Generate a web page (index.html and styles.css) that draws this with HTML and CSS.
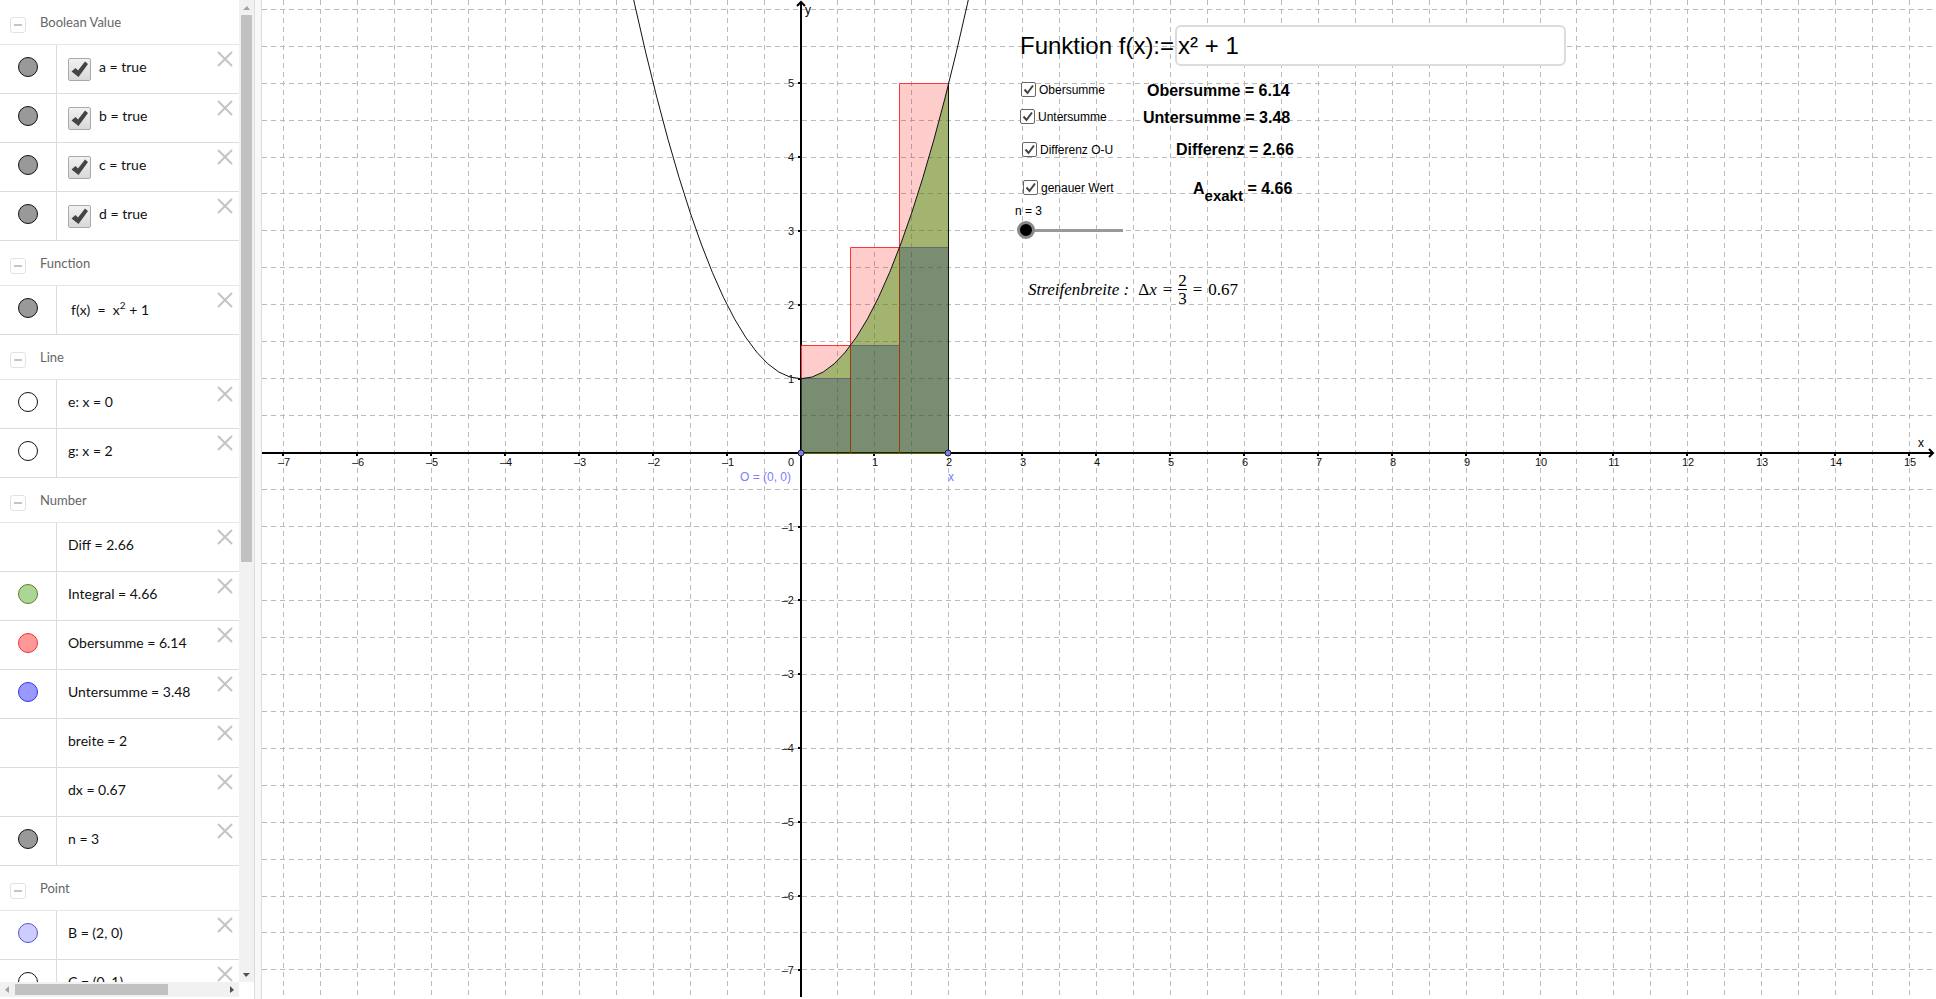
FILE: index.html
```html
<!DOCTYPE html>
<html lang="de">
<head>
    <meta charset="utf-8">
    <title>Obersumme und Untersumme</title>
    <link rel="stylesheet" href="styles.css">
</head>
<body>
    <div class="app">
        <aside class="algebra">
            <div class="list" id="list"></div>
            <div class="vscroll">
                <span class="arrow up"></span>
                <div class="vtrack"><div class="vthumb"></div></div>
                <span class="arrow down"></span>
            </div>
            <div class="hscroll">
                <span class="arrow left"></span>
                <div class="htrack"><div class="hthumb"></div></div>
                <span class="arrow right"></span>
            </div>
        </aside>
        <div class="splitter"></div>
        <main class="graphics" id="graphics">
            <svg class="plot" id="plot"></svg>

            <div class="obj function-box">
                <label for="fx">Funktion f(x):=</label>
                <input type="text" id="fx" value="x² + 1">
            </div>

            <label class="obj check c-ober"><input type="checkbox" checked>Obersumme</label>
            <label class="obj check c-unter"><input type="checkbox" checked>Untersumme</label>
            <label class="obj check c-diff"><input type="checkbox" checked>Differenz O-U</label>
            <label class="obj check c-exakt"><input type="checkbox" checked>genauer Wert</label>

            <div class="obj value v-ober">Obersumme = 6.14</div>
            <div class="obj value v-unter">Untersumme = 3.48</div>
            <div class="obj value v-diff">Differenz = 2.66</div>
            <div class="obj value v-exakt">A<sub>exakt</sub> = 4.66</div>

            <div class="obj slider">
                <label for="n">n = 3</label>
                <input type="range" id="n" min="3" max="50" value="3">
            </div>

            <div class="obj formula">
                <i>Streifenbreite :</i>
                <span>Δ<i>x</i></span>
                <span>=</span>
                <span class="frac"><span>2</span><span>3</span></span>
                <span>=</span>
                <span>0.67</span>
            </div>
        </main>
    </div>
    <script src="script.js"></script>
</body>
</html>
```
FILE: styles.css
```css
* {
    box-sizing: border-box;
}

body {
    margin: 0;
    background: white;
    font-family: "Liberation Sans", Arial, sans-serif;
}

.app {
    display: flex;
    height: 100vh;
    overflow: hidden;
}

/* algebra view */
.algebra {
    display: grid;
    grid-template-columns: 239px 15px;
    grid-template-rows: 1fr 15px;
    flex: none;
    padding-bottom: 2px;
    font-family: Lato, "Open Sans", sans-serif;
}

.list {
    overflow: hidden;
    min-height: 0;
}

.group {
    display: flex;
    align-items: center;
    gap: 14px;
    height: 45px;
    margin: 0;
    padding: 0 10px;
    border-bottom: 1px solid #e6e6e6;
    font-size: 13px;
    font-weight: normal;
    color: #666;
}

.toggle {
    width: 16px;
    height: 16px;
    margin-top: 5px;
    padding: 0 3px;
    border: 1px solid #e2e2e2;
    border-radius: 3px;
    background: white;
}

.toggle::before {
    content: "";
    display: block;
    height: 2px;
    background: #c4c4c4;
}

.row {
    display: flex;
    height: 49px;
    border-bottom: 1px solid #dcdcdc;
    font-size: 14px;
    color: #111;
}

.marble {
    width: 57px;
    padding: 12px 18px;
    border-right: 1px solid #dcdcdc;
}

.dot {
    display: block;
    width: 20px;
    height: 20px;
    padding: 0;
    border: 1px solid;
    border-radius: 50%;
}

.dot.gray { background: #999; border-color: #111; }
.dot.white { background: #fff; border-color: #111; }
.dot.green { background: #acd696; border-color: #5f7f20; }
.dot.red { background: #ff9999; border-color: #ee3333; }
.dot.blue { background: #9999ff; border-color: #3333ee; }
.dot.light { background: #ccccff; border-color: #5555cc; }

.def {
    display: flex;
    flex: 1;
    gap: 8px;
    padding-left: 11px;
    line-height: 44px;
    white-space: pre;
}

.def input {
    appearance: none;
    width: 23px;
    height: 23px;
    margin: 13px 0 0;
    border: 1px solid #aaa;
    border-radius: 2px;
    background: url('data:image/svg+xml,<svg xmlns="http://www.w3.org/2000/svg" viewBox="0 0 21 21"><path d="M2.500 12.500l4-3.500 2.500 2.500 7-9 3 2.500-9.500 13z" fill="%23444"/></svg>'), linear-gradient(#f2f2f2, #d8d8d8);
}

.def.latex {
    padding-left: 14px;
    line-height: 48px;
}

.def sup {
    font-size: 10px;
    line-height: 0;
}

.close {
    width: 16px;
    height: 16px;
    margin: 6px 6px 0 0;
    padding: 0;
    border: 0;
    background: none;
}

.close svg {
    display: block;
    stroke: #c4c4c4;
    stroke-width: 2;
}

.vscroll,
.hscroll {
    display: flex;
    background: #f1f1f1;
}

.vscroll {
    flex-direction: column;
}

.vtrack,
.htrack {
    flex: 1;
    padding: 0 2px;
}

.htrack {
    padding: 2px 0;
}

.vthumb {
    height: 57.5%;
    background: #c1c1c1;
}

.hthumb {
    width: 73%;
    height: 100%;
    background: #c1c1c1;
}

.arrow {
    width: 15px;
    height: 15px;
    background: #505050;
    clip-path: polygon(4px 6px, 11px 6px, 7px 10px);
}

.arrow.up {
    background: #a3a3a3;
    clip-path: polygon(4px 10px, 11px 10px, 8px 6px);
}

.arrow.left {
    background: #a3a3a3;
    clip-path: polygon(9px 4px, 9px 11px, 5px 8px);
}

.arrow.right {
    clip-path: polygon(6px 4px, 6px 11px, 10px 8px);
}

.splitter {
    flex: none;
    width: 8px;
    border: 1px solid #dcdcdc;
    border-top: 0;
    border-bottom: 0;
    background: #f8f8f8;
}

/* graphics view */
.graphics {
    position: relative;
    flex: 1;
    min-width: 0;
}

.plot {
    display: block;
    width: 100%;
    height: 100%;
}

.grid {
    stroke: #bbb;
    stroke-dasharray: 5 4;
}

.axis {
    stroke: #000;
    stroke-width: 2;
    fill: none;
}

.tick-label {
    font-size: 11px;
    fill: #111;
}

.axis-label {
    font-size: 12px;
}

.upper { fill: rgba(255, 0, 0, 0.2); }
.upper-line { stroke: #ff3333; fill: none; }
.lower { fill: rgba(0, 25, 124, 0.25); }
.lower-line { stroke: #66666e; }
.split-line { stroke: #963c0a; }
.base-line { stroke: #5a6400; }
.integral { fill: rgba(48, 151, 0, 0.45); }
.curve { stroke: #111; fill: none; }

.point {
    fill: #7d7dff;
    stroke: #222;
}

.point-label {
    font-size: 12px;
    fill: #7d7dff;
}

/* objects placed freely on the drawing pad */
.obj {
    position: absolute;
    white-space: nowrap;
}

.function-box {
    display: flex;
    align-items: center;
    gap: 1px;
    left: 758px;
    top: 25px;
    font-size: 24px;
}

.function-box input {
    width: 391px;
    height: 41px;
    padding: 0 1px;
    border: 2px solid #dcdcdc;
    border-radius: 6px;
    background: white;
    font: inherit;
}

.check {
    display: flex;
    align-items: center;
    gap: 3px;
    font-size: 12px;
    line-height: 14px;
}

.check input {
    appearance: none;
    width: 15px;
    height: 15px;
    margin: 0;
    border: 1px solid #666;
    border-radius: 2px;
    background: white url('data:image/svg+xml,<svg xmlns="http://www.w3.org/2000/svg" viewBox="0 0 13 13"><path d="M2.500 6.500L5.500 10 11 2.500" fill="none" stroke="%23444" stroke-width="2"/></svg>');
}

.c-ober { left: 759px; top: 82px; }
.c-unter { left: 758px; top: 109px; }
.c-diff { left: 760px; top: 142px; }
.c-exakt { left: 761px; top: 180px; }

.value {
    font-size: 16px;
    font-weight: bold;
    line-height: 18px;
}

.value sub {
    font-size: 15px;
    line-height: 0;
    vertical-align: -7px;
}

.v-ober { left: 885px; top: 82px; }
.v-unter { left: 881px; top: 109px; }
.v-diff { left: 914px; top: 141px; }
.v-exakt { left: 931px; top: 180px; }

.slider {
    left: 753px;
    top: 204px;
    font-size: 12px;
    line-height: 14px;
}

.slider input {
    appearance: none;
    display: block;
    width: 106px;
    height: 18px;
    margin: 3px 2px;
    background: linear-gradient(#999, #999) 9px 8px / 100% 3px no-repeat;
}

.slider input::-webkit-slider-thumb {
    appearance: none;
    width: 18px;
    height: 18px;
    border: 3px solid #888;
    border-radius: 50%;
    background: black;
}

.formula {
    display: flex;
    align-items: center;
    gap: 6px;
    left: 766px;
    top: 272px;
    font-family: "Liberation Serif", "Times New Roman", serif;
    font-size: 17px;
    line-height: 17px;
}

.formula > i {
    margin-right: 3px;
}

.frac {
    display: grid;
}

.frac span:first-child {
    border-bottom: 1px solid black;
}
```
FILE: script.js
```javascript
const groups = [
    { name: "Boolean Value", items: [
        { text: "a = true", color: "gray", check: true },
        { text: "b = true", color: "gray", check: true },
        { text: "c = true", color: "gray", check: true },
        { text: "d = true", color: "gray", check: true }
    ]},
    { name: "Function", items: [
        { text: "f(x)  =  x<sup>2</sup> + 1", color: "gray", latex: true }
    ]},
    { name: "Line", items: [
        { text: "e: x = 0", color: "white" },
        { text: "g: x = 2", color: "white" }
    ]},
    { name: "Number", items: [
        { text: "Diff = 2.66" },
        { text: "Integral = 4.66", color: "green" },
        { text: "Obersumme = 6.14", color: "red" },
        { text: "Untersumme = 3.48", color: "blue" },
        { text: "breite = 2" },
        { text: "dx = 0.67" },
        { text: "n = 3", color: "gray" }
    ]},
    { name: "Point", items: [
        { text: "B = (2, 0)", color: "light" },
        { text: "C = (0, 1)", color: "white" }
    ]}
];

// algebra list
let html = "";
groups.forEach(group => {
    html += `<h2 class="group"><button class="toggle" aria-label="${group.name}"></button>${group.name}</h2>`;
    group.items.forEach(item => {
        const dot = item.color ? `<button class="dot ${item.color}" aria-label="${item.text[0]}"></button>` : "";
        const tag = item.check ? "label" : "div";
        html += `
            <div class="row">
                <div class="marble">${dot}</div>
                <${tag} class="def${item.latex ? " latex" : ""}">${item.check ? '<input type="checkbox" checked>' : ""}<span>${item.text}</span></${tag}>
                <button class="close" aria-label="x"><svg width="16" height="16"><path d="M1 1l14 14M15 1L1 15"/></svg></button>
            </div>`;
    });
});
document.getElementById("list").innerHTML = html;

// drawing pad
const plot = document.getElementById("plot");
const unit = 73.9;
const x0 = 539;
const y0 = 453;

const px = x => x0 + x * unit;
const py = y => y0 - 0.4 - y * unit;
const f = x => x * x + 1;
const snap = v => Math.floor(v) + 0.5;

function line(cls, x1, y1, x2, y2) {
    return `<line class="${cls}" x1="${x1}" y1="${y1}" x2="${x2}" y2="${y2}"/>`;
}

function text(cls, x, y, str, anchor = "start") {
    return `<text class="${cls}" x="${x}" y="${y}" text-anchor="${anchor}">${str}</text>`;
}

function draw() {
    const w = plot.clientWidth;
    const h = plot.clientHeight;
    const n = 3;
    const dx = 2 / n;
    let s = "";

    // grid
    const firstX = Math.ceil(-x0 / unit * 2);
    const lastX = Math.floor((w - x0) / unit * 2);
    const firstY = Math.ceil((y0 - h) / unit * 2);
    const lastY = Math.floor(y0 / unit * 2);
    for (let i = firstX; i <= lastX; i++) {
        if (i !== 0) s += line("grid", snap(px(i / 2)), 0, snap(px(i / 2)), h - 2);
    }
    for (let i = firstY; i <= lastY; i++) {
        if (i !== 0) s += line("grid", 0, snap(py(i / 2)), w, snap(py(i / 2)));
    }

    // axes
    s += `<path class="axis" d="M0 ${y0}H${w - 3}M${w - 7} ${y0 - 4}l4 4l-4 4"/>`;
    s += `<path class="axis" d="M${x0} ${h - 2}V2M${x0 - 4} 6l4 -4l4 4"/>`;
    for (let i = Math.ceil(firstX / 2); i <= lastX / 2; i++) {
        if (i === 0) continue;
        const x = Math.floor(px(i));
        s += line("axis", x, y0, x, y0 + 3);
        s += text("tick-label", x + 1, y0 + 13, String(i).replace("-", "–"), "middle");
    }
    for (let i = Math.ceil(firstY / 2); i <= lastY / 2; i++) {
        const y = Math.round(py(i));
        // no number next to the arrow head
        if (i === 0 || y < 20) continue;
        s += line("axis", x0 - 3, y, x0, y);
        s += text("tick-label", x0 - 7, y + 4, String(i).replace("-", "–"), "end");
    }
    s += text("tick-label", x0 - 7, y0 + 13, "0", "end");
    s += text("axis-label", w - 18, y0 - 6, "x");
    s += text("axis-label", x0 + 4, 14, "y");

    // upper sum, integral, lower sum
    for (let i = 0; i < n; i++) {
        const top = f((i + 1) * dx);
        s += `<rect class="upper" x="${px(i * dx)}" y="${py(top)}" width="${dx * unit}" height="${top * unit}"/>`;
    }
    s += `<path class="integral" d="M${px(0)} ${py(0)}V${py(1)}Q${px(1)} ${py(1)} ${px(2)} ${py(5)}V${py(0)}z"/>`;
    for (let i = 0; i < n; i++) {
        const low = f(i * dx);
        s += `<rect class="lower" x="${px(i * dx)}" y="${py(low)}" width="${dx * unit}" height="${low * unit}"/>`;
        s += line("lower-line", px(i * dx), snap(py(low)), px((i + 1) * dx), snap(py(low)));
    }
    for (let i = 0; i < n; i++) {
        const left = snap(px(i * dx));
        const top = snap(py(f((i + 1) * dx)));
        s += `<path class="upper-line" d="M${left} ${py(f(i * dx))}V${top}H${px((i + 1) * dx)}"/>`;
        if (i > 0) s += line("split-line", left, py(f(i * dx)), left, y0);
    }
    s += line("base-line", px(0), y0 + 0.5, px(2), y0 + 0.5);
    s += line("curve", snap(px(2) - 0.5), py(5), snap(px(2) - 0.5), y0);

    // the parabola as one quadratic segment
    const a = 2.4;
    s += `<path class="curve" d="M${px(-a)} ${py(f(a))}Q${px(0)} ${py(1 - a * a)} ${px(a)} ${py(f(a))}"/>`;

    s += `<circle class="point" cx="${x0}" cy="${y0}" r="3"/>`;
    s += `<circle class="point" cx="${Math.floor(px(2))}" cy="${y0}" r="3"/>`;
    s += text("point-label", x0 - 61, y0 + 28, "O = (0, 0)");
    s += text("point-label", Math.floor(px(2)), y0 + 28, "x");

    plot.innerHTML = s;
}

draw();
window.addEventListener("resize", draw);
```
